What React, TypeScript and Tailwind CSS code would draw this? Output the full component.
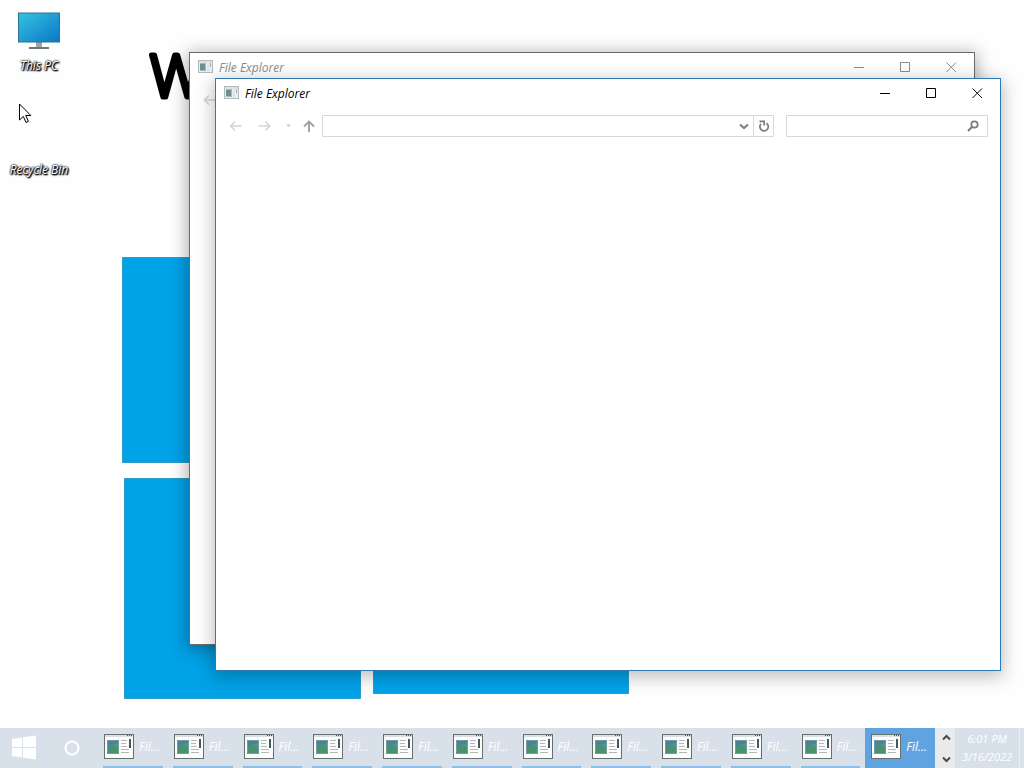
import React from "react";

const tasks = Array.from({ length: 12 }, (_, i) => ({ id: i, title: "Fil...", active: i === 11 }));

function AppIcon() {
  return (
    <svg width="16" height="16" viewBox="0 0 16 16" shapeRendering="crispEdges" aria-hidden="true">
      <rect x="0.5" y="1.5" width="14" height="12" fill="#eceff0" stroke="#b3babd" />
      <rect x="1" y="2" width="13" height="2" fill="#dde1e3" />
      <rect x="2" y="4" width="6" height="8" fill="#a4bcbd" />
      <rect x="2" y="5" width="5" height="6" fill="#6b9092" />
      <rect x="9" y="5" width="2" height="7" fill="#dfe3e4" />
      <rect x="12" y="4" width="1" height="4" fill="#a3aaad" />
    </svg>
  );
}

function TaskIcon() {
  return (
    <svg width="32" height="28" viewBox="0 0 32 28" className="shrink-0" aria-hidden="true">
      <rect x="1.5" y="1.500" width="29" height="24" fill="#fbfdfd" stroke="#66716f" />
      <rect x="2" y="2" width="28" height="2" fill="#dbe1e3" />
      <path d="M24 2.500h1M26 2.500h1M28 2.500h1" stroke="#4b5558" />
      <path d="M4 7h12v14H4z" fill="#4f9880" />
      <path d="M4 7h12v3l-5 1-7 4z" fill="#4d7fa0" />
      <path d="M4 14l5-3 7 4v6H4z" fill="#489172" />
      <path d="M4.500 7.500h11v13h-11z" fill="none" stroke="#7d9fa2" strokeWidth=".8" />
      <path d="M18 7.500h6M18 10.500h5M18 13.500h6M18 16.500h8M18 19.500h8" stroke="#b9b6b8" />
      <rect x="26" y="6" width="2" height="9" fill="#48575a" />
    </svg>
  );
}

function Caption({ active }: { active: boolean }) {
  const btn = "flex h-7 w-[46px] items-center justify-center";
  return (
    <header className={`flex h-7 items-center pl-2 ${active ? "text-black" : "text-[#8c8c8c]"}`}>
      <AppIcon />
      <h2 className="flex-1 pl-[5px] pt-[2px] text-[12px] leading-4 italic">File Explorer</h2>
      <div className="flex">
        <button aria-label="Minimize" className={btn}>
          <svg width="10" height="11" stroke="currentColor"><path d="M0 5.5h10" /></svg>
        </button>
        <button aria-label="Maximize" className={btn}>
          <svg width="11" height="11" fill="none" stroke="currentColor"><path d="M.5.5h9v9h-9z" /></svg>
        </button>
        <button aria-label="Close" className={btn}>
          <svg width="11" height="11" fill="none" stroke="currentColor"><path d="M.5.5l9.500 9.500M10 .5L.5 10" /></svg>
        </button>
      </div>
    </header>
  );
}

function NavBar() {
  return (
    <div className="flex items-center pt-2 pr-3">
      <div className="flex w-[106px] items-center pl-3">
        <button aria-label="Back" className="flex w-[29px] text-[#d4d4d4]">
          <svg width="14" height="12" fill="none" stroke="currentColor" strokeWidth="1.500"><path d="M13.500 6H2.500M7 1.500L2.500 6 7 10.500" /></svg>
        </button>
        <button aria-label="Forward" className="flex w-[29px] text-[#d4d4d4]">
          <svg width="14" height="12" fill="none" stroke="currentColor" strokeWidth="1.500"><path d="M1.500 6h11.500M8.500 1.500L13 6l-4.500 4.500" /></svg>
        </button>
        <button aria-label="Recent locations" className="flex w-4 text-[#c8c8c8]">
          <svg width="6" height="4" fill="currentColor"><path d="M0 .5h5l-2.500 2.500z" /></svg>
        </button>
        <button aria-label="Up" className="flex text-[#a0a0a0]">
          <svg width="14" height="14" fill="none" stroke="currentColor" strokeWidth="1.900"><path d="M7 13V2.500M2 7.500l5-5 5 5" /></svg>
        </button>
      </div>
      <div className="flex h-[22px] flex-1 border border-[#d9d9d9]">
        <input aria-label="Address" className="min-w-0 flex-1 px-1 text-[12px] outline-none" />
        <button aria-label="Previous locations" className="flex w-[19px] items-center justify-center text-[#808080]">
          <svg width="10" height="7" fill="none" stroke="currentColor" strokeWidth="2.200"><path d="M1 1.500l4 3.500 4-3.500" /></svg>
        </button>
        <button aria-label="Refresh" className="flex w-5 items-center justify-center border-l border-[#d9d9d9] text-[#7c7c7c]">
          <svg width="12" height="12" fill="none" stroke="currentColor" strokeWidth="1.700"><path d="M8.500 3.200A4.200 4.200 0 1 1 3 3.800M1.500 1.300h4.700v4.200" /></svg>
        </button>
      </div>
      <div className="ml-3 flex h-[22px] w-[202px] items-center border border-[#d9d9d9] pr-2">
        <input aria-label="Search" className="min-w-0 flex-1 px-1 text-[12px] outline-none" />
        <button aria-label="Start search" className="text-[#7c7c7c]">
          <svg width="12" height="12" fill="none" stroke="currentColor" strokeWidth="1.700"><circle cx="7.500" cy="4.500" r="3.200" /><path d="M5.200 6.800L1 11" strokeWidth="2" /></svg>
        </button>
      </div>
    </div>
  );
}

function ExplorerWindow({ active, place }: { active: boolean; place: string }) {
  const frame = active
    ? "border-[#2b7ab5] shadow-[0_4px_16px_2px_rgba(0,0,0,0.25)]"
    : "border-[#6b6b6b] shadow-[0_3px_16px_2px_rgba(0,0,0,0.32)]";
  return (
    <section aria-label="File Explorer" className={`absolute h-[593px] w-[786px] border bg-white ${frame} ${place}`}>
      <Caption active={active} />
      <NavBar />
    </section>
  );
}

function Wallpaper() {
  return (
    <div className="absolute inset-0 overflow-hidden bg-[#fefefe]" aria-hidden="true">
      <svg className="h-full w-full">
        <text x="150" y="97" fontFamily="Open Sans" fontWeight="300" fontSize="59" stroke="#000" strokeWidth="5" strokeLinejoin="round">W</text>
        <g fill="#00a2e8" stroke="#2f9bc8">
          <path d="M122.500 257.500H361V462.500H122.500z" />
          <path d="M373.500 257.500H628.500V462.500H373.500z" />
          <path d="M124.500 478.500H360.500V698.500H124.500z" />
          <path d="M373.500 478.500H628.500V693.500H373.500z" />
        </g>
      </svg>
    </div>
  );
}

const iconLabel =
  "whitespace-nowrap text-[12px] leading-4 italic text-white [text-shadow:0_0_2px_#000,1px_1px_1px_#000,0_0_2px_#000,1px_1px_2px_#000]";

function DesktopIcons() {
  return (
    <div className="relative flex w-[78px] flex-col">
      <button className="flex h-[102px] flex-col items-center pt-[11px]">
        <svg width="44" height="39" viewBox="0 0 44 39" aria-hidden="true">
          <defs>
            <linearGradient id="screen" x1="0" y1="0" x2="1" y2="1">
              <stop offset="0" stopColor="#35c3e3" />
              <stop offset="1" stopColor="#0c76c4" />
            </linearGradient>
          </defs>
          <path d="M19 31h6v5h-6z" fill="#9ea6aa" />
          <path d="M12 36h20v2H12z" fill="#6f7679" />
          <rect x="1.500" y="2" width="41" height="29" fill="url(#screen)" stroke="#2c7392" />
        </svg>
        <span className={`mt-2 ${iconLabel}`}>This PC</span>
      </button>
      <button className="flex h-[76px] flex-col items-center justify-end">
        <span className={iconLabel}>Recycle Bin</span>
      </button>
    </div>
  );
}

function Taskbar() {
  return (
    <footer className="relative flex h-10 items-stretch bg-[#d8e1ea] text-[12px] italic text-white">
      <button aria-label="Start" className="flex w-12 items-center justify-center">
        <svg width="26" height="26" viewBox="0 0 26 26" fill="#fff" aria-hidden="true">
          <path d="M1 4l10-1.500V12H1zM12 2.300L25 .5V12H12zM1 13h10v9.500L1 21zM12 13h13v11.500l-13-1.800z" />
        </svg>
      </button>
      <button aria-label="Search" className="flex w-12 items-center justify-center">
        <svg width="16" height="16" fill="none" stroke="#fff" strokeWidth="2" aria-hidden="true"><circle cx="8" cy="8" r="6.500" /></svg>
      </button>
      <nav aria-label="Running applications" className="ml-[2px] grid min-w-0 flex-1 grid-cols-12">
        {tasks.map((t) => (
          <button key={t.id} className={`flex min-w-0 flex-col px-[5px] ${t.active ? "bg-[#5fa4e0]" : ""}`}>
            <span className="flex h-[38px] w-full items-center gap-1">
              <TaskIcon />
              <span className="whitespace-nowrap">{t.title}</span>
            </span>
            <span className={`h-[2px] w-full ${t.active ? "" : "bg-[#8fbfe8]"}`} />
          </button>
        ))}
      </nav>
      <div className="flex w-5 flex-col bg-[#e9eaec] text-[#4a4a4a]">
        <button aria-label="Scroll up" className="flex flex-1 items-center justify-center pl-[2px]">
          <svg width="9" height="7" fill="none" stroke="currentColor" strokeWidth="2"><path d="M1 5.500L4.500 2 8 5.500" /></svg>
        </button>
        <button aria-label="Scroll down" className="flex flex-1 items-center justify-center pt-1 pl-[2px]">
          <svg width="9" height="7" fill="none" stroke="currentColor" strokeWidth="2"><path d="M1 1.500L4.500 5 8 1.500" /></svg>
        </button>
      </div>
      <div className="flex w-16 flex-col items-center justify-center text-[11px] leading-[18px]">
        <time>6:01 PM</time>
        <time>3/16/2022</time>
      </div>
      <button aria-label="Show desktop" className="w-[5px] border-l border-[#e8eef4]" />
    </footer>
  );
}

export default function App() {
  return (
    <div className="relative flex h-screen flex-col overflow-hidden font-['Open_Sans',sans-serif]">
      <Wallpaper />
      <main className="relative flex-1">
        <DesktopIcons />
        <ExplorerWindow active={false} place="left-[189px] top-[52px]" />
        <ExplorerWindow active place="left-[215px] top-[78px]" />
        <svg className="absolute left-[19px] top-[103px]" width="13" height="21" aria-hidden="true">
          <path d="M.5 1v16l3.800-3.600 2.700 6.100 2.400-1.100-2.600-5.900h5z" fill="#fff" stroke="#000" />
        </svg>
      </main>
      <Taskbar />
    </div>
  );
}
